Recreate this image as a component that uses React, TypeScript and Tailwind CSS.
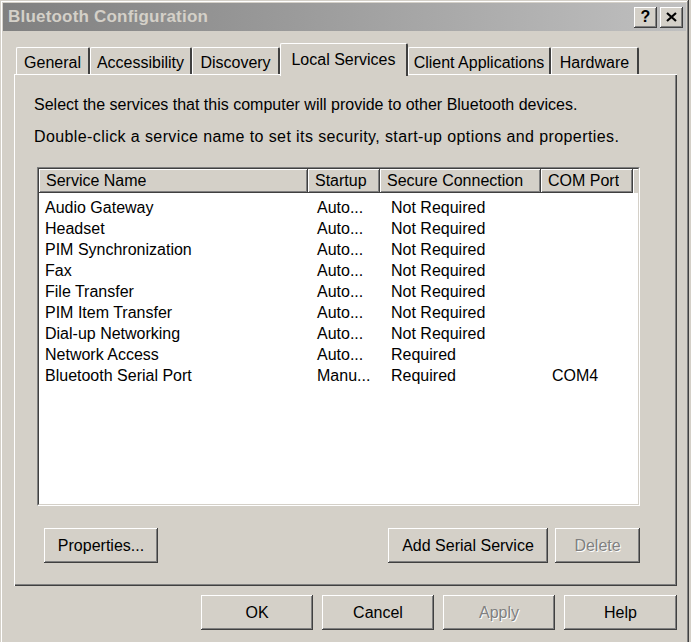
import React from 'react';

const raised =
  'bg-[#d4d0c8] shadow-[inset_-1px_-1px_#404040,inset_1px_1px_#ffffff,inset_-2px_-2px_#808080,inset_2px_2px_#d4d0c8]';

interface Row {
  name: string;
  startup: string;
  secure: string;
  port?: string;
}

const rows: Row[] = [
  { name: 'Audio Gateway', startup: 'Auto...', secure: 'Not Required' },
  { name: 'Headset', startup: 'Auto...', secure: 'Not Required' },
  { name: 'PIM Synchronization', startup: 'Auto...', secure: 'Not Required' },
  { name: 'Fax', startup: 'Auto...', secure: 'Not Required' },
  { name: 'File Transfer', startup: 'Auto...', secure: 'Not Required' },
  { name: 'PIM Item Transfer', startup: 'Auto...', secure: 'Not Required' },
  { name: 'Dial-up Networking', startup: 'Auto...', secure: 'Not Required' },
  { name: 'Network Access', startup: 'Auto...', secure: 'Required' },
  { name: 'Bluetooth Serial Port', startup: 'Manu...', secure: 'Required', port: 'COM4' },
];

const tabs = [
  { label: 'General', w: 'w-[74px]' },
  { label: 'Accessibility', w: 'w-[102px]' },
  { label: 'Discovery', w: 'w-[88px]' },
  { label: 'Local Services', w: 'w-[128px]', active: true },
  { label: 'Client Applications', w: 'w-[143px]' },
  { label: 'Hardware', w: 'w-[88px]' },
];

function Button({ label, className = '', disabled = false }: { label: string; className?: string; disabled?: boolean }) {
  return (
    <div className={`${raised} flex items-center justify-center ${className}`}>
      <span className={disabled ? 'text-[#808080] [text-shadow:1px_1px_#ffffff]' : 'text-black'}>{label}</span>
    </div>
  );
}

function HeaderCell({ label, className = '' }: { label: string; className?: string }) {
  return (
    <div className={`${raised} h-[24px] flex items-center px-[7px] shrink-0 ${className}`}>
      <span className="truncate">{label}</span>
    </div>
  );
}

export default function App() {
  return (
    <div className="w-[691px] h-[642px] bg-[#d4d0c8] overflow-hidden text-[16px] text-black font-['Liberation_Sans',Arial,sans-serif]">
      {/* window frame */}
      <div className="w-[689px] h-[680px] bg-[#d4d0c8] p-[3px] shadow-[inset_-1px_-1px_#404040,inset_1px_1px_#d4d0c8,inset_-2px_-2px_#808080,inset_2px_2px_#ffffff]">
        {/* title bar */}
        <div className="h-[28px] flex items-center justify-between bg-gradient-to-r from-[#808080] to-[#c0c0c0] pl-[5px] pr-[3px]">
          <span className="font-bold text-[17px] text-[#d4d0c8] tracking-[0.2px]">Bluetooth Configuration</span>
          <div className="flex gap-[3px]">
            <div className={`${raised} w-[23px] h-[21px] flex items-center justify-center font-bold text-[16px]`}>?</div>
            <div className={`${raised} w-[23px] h-[21px] flex items-center justify-center`}>
              <svg width="11" height="10" viewBox="0 0 11 10">
                <path d="M1 1 L10 9 M10 1 L1 9" stroke="#000" strokeWidth="2.2" />
              </svg>
            </div>
          </div>
        </div>

        {/* body */}
        <div className="pl-[11px] pr-[9px] pt-[12px]">
          {/* tabs */}
          <div className="flex items-end h-[31px] pl-[2px]">
            {tabs.map((t) =>
              t.active ? (
                <div
                  key={t.label}
                  className={`${t.w} relative z-10 h-[33px] -mb-[2px] bg-[#d4d0c8] border-l border-t border-white border-r-2 border-r-[#404040] rounded-tl-[2px] rounded-tr-[2px] flex justify-center pt-[4px] whitespace-nowrap`}
                >
                  {t.label}
                </div>
              ) : (
                <div
                  key={t.label}
                  className={`${t.w} h-[27px] bg-[#d4d0c8] border-l border-t border-white border-r-2 border-r-[#404040] rounded-tl-[2px] rounded-tr-[2px] flex justify-center pt-[3px] whitespace-nowrap`}
                >
                  {t.label}
                </div>
              )
            )}
          </div>

          {/* panel */}
          <div className="h-[512px] border-l border-t border-white shadow-[inset_-1px_-1px_#404040,inset_-2px_-2px_#808080] pl-[22px] pr-[37px] pt-[21px] flex flex-col">
            <p className="-ml-[3px] leading-[18px] whitespace-nowrap">Select the services that this computer will provide to other Bluetooth devices.</p>
            <p className="-ml-[3px] mt-[14px] leading-[18px] whitespace-nowrap tracking-[0.4px]">Double-click a service name to set its security, start-up options and properties.</p>

            {/* list view */}
            <div className="mt-[21px] h-[339px] bg-white border-t border-l border-[#808080] border-r border-b border-r-white border-b-white">
              <div className="h-full border-t border-l border-[#404040] border-r border-b border-r-[#d4d0c8] border-b-[#d4d0c8] flex flex-col">
                <div className="flex">
                  <HeaderCell label="Service Name" className="w-[269px]" />
                  <HeaderCell label="Startup" className="w-[72px]" />
                  <HeaderCell label="Secure Connection" className="w-[161px]" />
                  <HeaderCell label="COM Port" className="w-[92px]" />
                  <div className="flex-1 h-[24px] bg-[#d4d0c8] shadow-[inset_1px_1px_#ffffff]" />
                </div>
                <div className="pt-[4px]">
                  {rows.map((r) => (
                    <div key={r.name} className="flex h-[21px] items-center whitespace-nowrap">
                      <div className="w-[269px] pl-[6px] shrink-0">{r.name}</div>
                      <div className="w-[72px] pl-[9px] shrink-0">{r.startup}</div>
                      <div className="w-[161px] pl-[11px] shrink-0">{r.secure}</div>
                      <div className="w-[92px] pl-[11px] shrink-0">{r.port ?? ''}</div>
                    </div>
                  ))}
                </div>
              </div>
            </div>

            {/* list buttons */}
            <div className="mt-[22px] flex items-center">
              <Button label="Properties..." className="ml-[7px] w-[114px] h-[35px]" />
              <div className="flex-1" />
              <Button label="Add Serial Service" className="w-[160px] h-[35px]" />
              <Button label="Delete" disabled className="ml-[7px] w-[85px] h-[35px]" />
            </div>
          </div>

          {/* dialog buttons */}
          <div className="mt-[9px] flex justify-end gap-[9px]">
            <Button label="OK" className="w-[112px] h-[35px]" />
            <Button label="Cancel" className="w-[112px] h-[35px]" />
            <Button label="Apply" disabled className="w-[112px] h-[35px]" />
            <Button label="Help" className="w-[113px] h-[35px]" />
          </div>
        </div>
      </div>
    </div>
  );
}
